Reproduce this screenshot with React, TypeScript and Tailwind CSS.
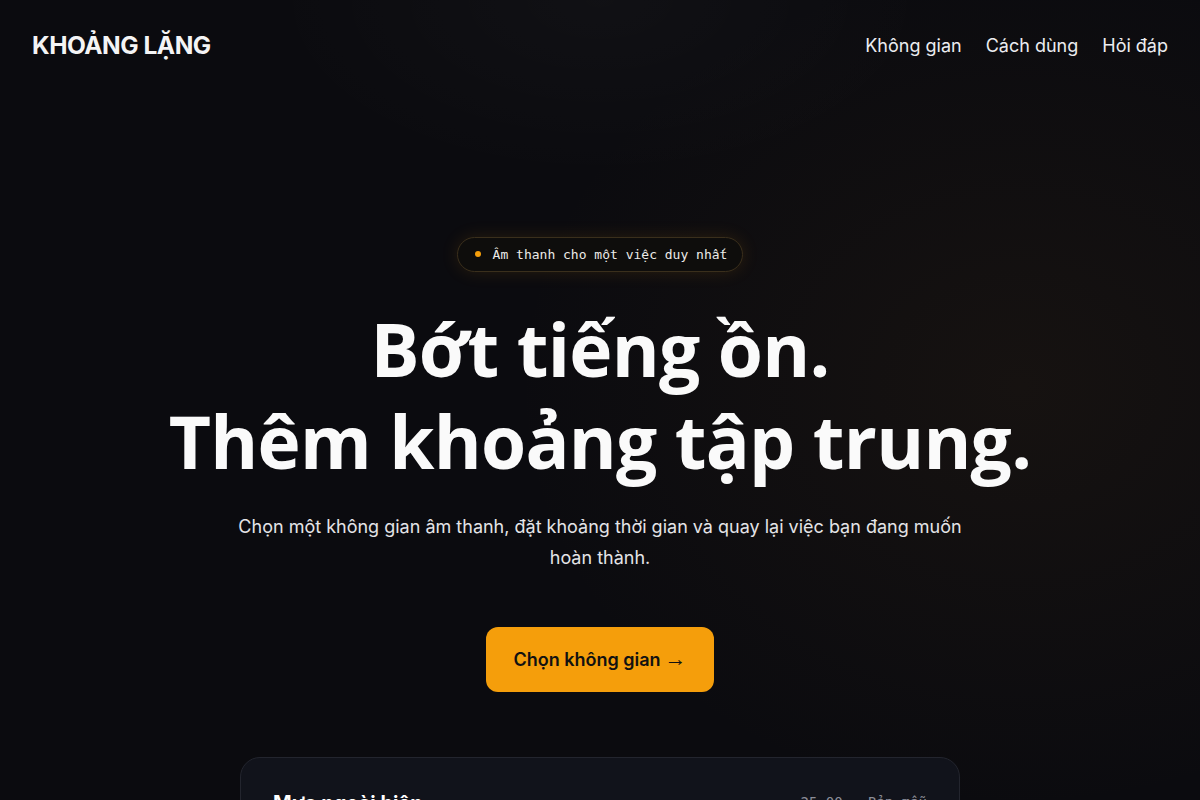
import React from "react";

export default function App() {
  return (
    <div
      className="relative min-h-[800px] w-full overflow-hidden bg-[#0b0b0f] text-white"
      style={{ fontFamily: "Inter, 'Noto Sans', sans-serif" }}
    >
      <div className="pointer-events-none absolute inset-0 bg-[radial-gradient(ellipse_60%_70%_at_85%_45%,rgba(120,80,30,0.10),transparent_70%)]" />
      <div className="pointer-events-none absolute inset-0 bg-[radial-gradient(ellipse_40%_30%_at_50%_0%,rgba(255,255,255,0.025),transparent_70%)]" />
      <header className="relative flex items-center justify-between px-8 pt-[27px]">
        <div className="text-[24.5px] font-bold tracking-[-0.02em] text-[#f4f4f5]">KHOẢNG LẶNG</div>
        <nav className="flex items-center gap-6 text-[18px] text-[#ececf0]">
          <a>Không gian</a>
          <a>Cách dùng</a>
          <a>Hỏi đáp</a>
        </nav>
      </header>

      <main className="relative flex flex-col items-center pt-[173px]">
        <div
          className="flex h-[35px] items-center gap-[12px] rounded-full border border-[#3a2f1c] bg-[#0e0d0c] pl-[17px] pr-[15px] text-[13px] text-[#ecebe8] shadow-[0_0_18px_rgba(245,158,11,0.12)]"
          style={{ fontFamily: "'DejaVu Sans Mono', 'Liberation Mono', monospace" }}
        >
          <span className="h-[6px] w-[6px] rounded-full bg-[#f59e0b]" />
          <span>Âm thanh cho một việc duy nhất</span>
        </div>

        <h1
          className="mt-[31px] text-center text-[73px] font-bold leading-[92px] tracking-[-0.01em] text-[#fafafa]"
          style={{ fontFamily: "'Open Sans', 'Noto Sans', sans-serif" }}
        >
          Bớt tiếng ồn.
          <br />
          Thêm khoảng tập trung.
        </h1>

        <p className="mt-[24px] max-w-[740px] text-center text-[18px] leading-[31px] text-[#e4e4e7]">
          Chọn một không gian âm thanh, đặt khoảng thời gian và quay lại việc bạn đang muốn hoàn thành.
        </p>

        <button className="mt-[54px] flex h-[65px] w-[228px] items-center justify-center gap-[4px] rounded-[12px] bg-[#f59e0b] text-[18px] font-semibold text-[#111111]">
          <span>Chọn không gian</span>
          <span className="-translate-y-[2px] text-[22px] font-light leading-none" style={{ fontFamily: "'Noto Sans', sans-serif" }}>→</span>
        </button>

        <div className="mt-[65px] w-[720px] rounded-[20px] border border-[#23252e] bg-[#11131b] px-8 pt-[30px] pb-10">
          <div className="flex items-center justify-between">
            <div className="text-[20px] font-bold text-white">Mưa ngoài hiên</div>
            <div
              className="text-[14px] text-[#8b8d98]"
              style={{ fontFamily: "'DejaVu Sans Mono', 'Liberation Mono', monospace" }}
            >
              25:00 · Bản mẫu
            </div>
          </div>
        </div>
      </main>
    </div>
  );
}
